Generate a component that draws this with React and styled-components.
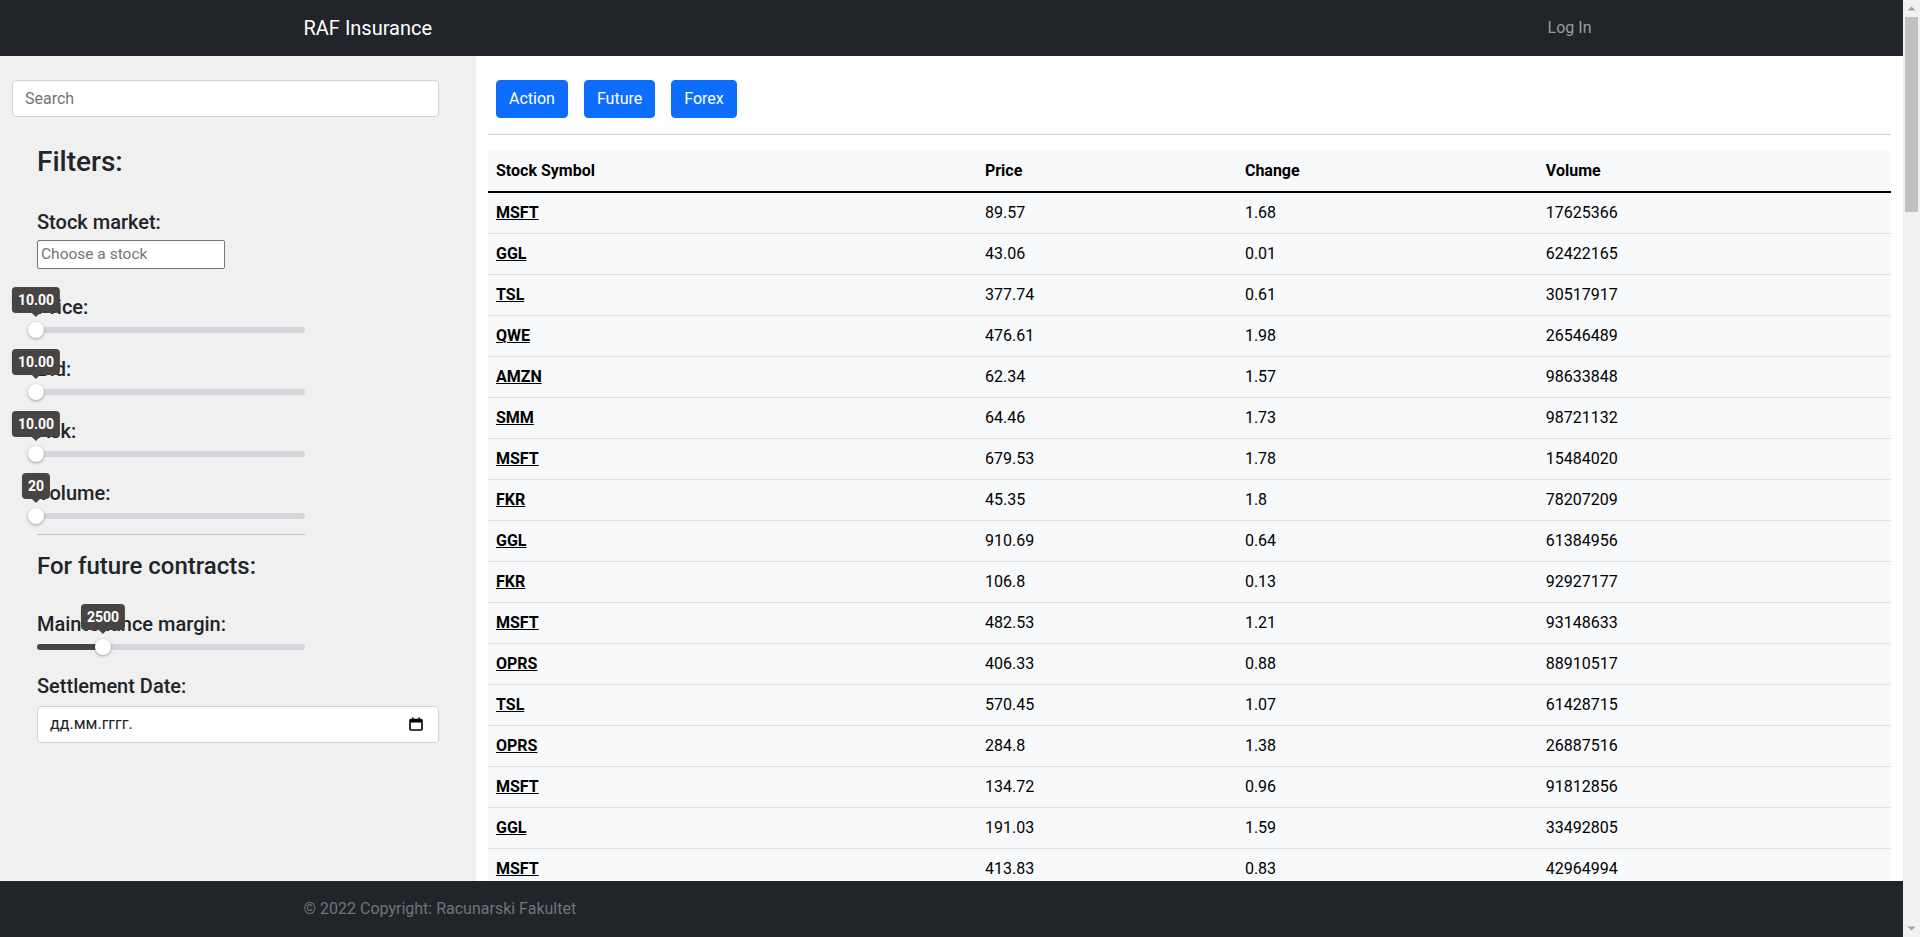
import React from 'react';
import styled, { createGlobalStyle } from 'styled-components';

const GlobalStyle = createGlobalStyle`
  * { box-sizing: border-box; }
  body {
    margin: 0;
    font-family: Roboto, "Liberation Sans", sans-serif;
    font-size: 16px;
    line-height: 1.5;
    color: #212529;
    background: #fff;
    overflow: hidden;
  }
`;

// first rows copied as they are, the rest filled in from a seed
const firstRows = [
  ['MSFT', '89.57', '1.68', '17625366'],
  ['GGL', '43.06', '0.01', '62422165'],
  ['TSL', '377.74', '0.61', '30517917'],
  ['QWE', '476.61', '1.98', '26546489'],
  ['AMZN', '62.34', '1.57', '98633848'],
  ['SMM', '64.46', '1.73', '98721132'],
  ['MSFT', '679.53', '1.78', '15484020'],
  ['FKR', '45.35', '1.8', '78207209'],
  ['GGL', '910.69', '0.64', '61384956'],
  ['FKR', '106.8', '0.13', '92927177'],
  ['MSFT', '482.53', '1.21', '93148633'],
  ['OPRS', '406.33', '0.88', '88910517'],
  ['TSL', '570.45', '1.07', '61428715'],
  ['OPRS', '284.8', '1.38', '26887516'],
  ['MSFT', '134.72', '0.96', '91812856'],
  ['GGL', '191.03', '1.59', '33492805'],
  ['MSFT', '413.83', '0.83', '42964994'],
];

const symbols = ['MSFT', 'GGL', 'TSL', 'QWE', 'AMZN', 'SMM', 'FKR', 'OPRS'];

const makeRows = () => {
  let seed = 42;
  const rnd = () => {
    seed = (seed * 16807) % 2147483647;
    return seed / 2147483647;
  };
  const rows = [...firstRows];
  while (rows.length < 100) {
    rows.push([
      symbols[Math.floor(rnd() * symbols.length)],
      String(Math.round(rnd() * 95000 + 1000) / 100),
      String(Math.round(rnd() * 200) / 100),
      String(Math.floor(rnd() * 90000000 + 10000000)),
    ]);
  }
  return rows;
};

const rows = makeRows();

const sliders = [
  { label: 'Price:', value: 0, text: '10.00' },
  { label: 'Bid:', value: 0, text: '10.00' },
  { label: 'Ask:', value: 0, text: '10.00' },
  { label: 'Volume:', value: 0, text: '20' },
];

function Slider({ label, value, text }) {
  return (
    <SliderGroup>
      <FieldLabel>{label}</FieldLabel>
      <SliderRow>
        <Track>
          <Fill style={{ width: `${value}%` }} />
          <Thumb style={{ left: `${value}%` }}>
            <Tip>{text}</Tip>
          </Thumb>
        </Track>
      </SliderRow>
    </SliderGroup>
  );
}

const CalendarIcon = () => (
  <svg width="14" height="14" viewBox="0 0 14 14" fill="none">
    <rect x="1" y="2.5" width="12" height="10.5" rx="1" stroke="#000" strokeWidth="1.6" />
    <rect x="1" y="2.5" width="12" height="3" fill="#000" />
    <rect x="3" y="0.5" width="1.6" height="3" fill="#000" />
    <rect x="9.4" y="0.5" width="1.6" height="3" fill="#000" />
  </svg>
);

const Arrow = ({ down }) => (
  <svg width="17" height="17" viewBox="0 0 17 17">
    <path d={down ? 'M4.5 6.5h8l-4 4z' : 'M4.5 10.5h8l-4-4z'} fill="#a3a3a3" />
  </svg>
);

export default function App() {
  return (
    <>
      <GlobalStyle />
      <Shell>
        <Viewport>
          <Navbar>
            <Container>
              <Brand>RAF Insurance</Brand>
              <NavLink>Log In</NavLink>
            </Container>
          </Navbar>

          <Page>
            <Sidebar>
              <SearchInput placeholder="Search" />
              <Filters>
                <Title>Filters:</Title>
                <StockLabel>Stock market:</StockLabel>
                <StockInput placeholder="Choose a stock" />
                <Sliders>
                  {sliders.map((s) => (
                    <Slider key={s.label} {...s} />
                  ))}
                </Sliders>
                <Rule />
                <SubTitle>For future contracts:</SubTitle>
                <Slider label="Maintenance margin:" value={25} text="2500" />
                <DateLabel>Settlement Date:</DateLabel>
                <DateField>
                  <span>дд.мм.гггг.</span>
                  <CalendarIcon />
                </DateField>
              </Filters>
            </Sidebar>

            <Main>
              <Buttons>
                <Button>Action</Button>
                <Button>Future</Button>
                <Button>Forex</Button>
              </Buttons>
              <Divider />
              <Table>
                <colgroup>
                  <col style={{ width: '34.85%' }} />
                  <col style={{ width: '18.53%' }} />
                  <col style={{ width: '21.45%' }} />
                  <col style={{ width: '25.17%' }} />
                </colgroup>
                <thead>
                  <tr>
                    <Th>Stock Symbol</Th>
                    <Th>Price</Th>
                    <Th>Change</Th>
                    <Th>Volume</Th>
                  </tr>
                </thead>
                <tbody>
                  {rows.map((r, i) => (
                    <tr key={i}>
                      <Td><Symbol href="#">{r[0]}</Symbol></Td>
                      <Td>{r[1]}</Td>
                      <Td>{r[2]}</Td>
                      <Td>{r[3]}</Td>
                    </tr>
                  ))}
                </tbody>
              </Table>
            </Main>
          </Page>

          <Footer>
            <Container>
              <FooterText>© 2022 Copyright: Racunarski Fakultet</FooterText>
            </Container>
          </Footer>
        </Viewport>

        <Rail>
          <Arrow />
          <RailTrack>
            <RailThumb />
          </RailTrack>
          <Arrow down />
        </Rail>
      </Shell>
    </>
  );
}

const Shell = styled.div`
  height: 100vh;
  display: flex;
`;

const Viewport = styled.div`
  flex: 1;
  min-width: 0;
  overflow-y: auto;
  scrollbar-width: none;
  display: flex;
  flex-direction: column;
  &::-webkit-scrollbar { display: none; }
`;

const Rail = styled.div`
  flex: 0 0 17px;
  background: #f1f1f1;
  display: flex;
  flex-direction: column;
`;

const RailTrack = styled.div`
  flex: 1;
  padding: 0 2px 0 2px;
`;

const RailThumb = styled.div`
  height: 195px;
  background: #c1c1c1;
`;

const Navbar = styled.nav`
  flex-shrink: 0;
  height: 56px;
  background: #212529;
  display: flex;
  align-items: center;
`;

const Container = styled.div`
  width: 100%;
  max-width: 1320px;
  margin: 0 auto;
  padding: 0 12px;
  display: flex;
  align-items: center;
  justify-content: space-between;
`;

const Brand = styled.span`
  color: #fff;
  font-size: 20px;
  line-height: 30px;
`;

const NavLink = styled.span`
  color: rgba(255, 255, 255, 0.55);
  padding: 8px;
  font-size: 16px;
`;

const Page = styled.div`
  flex: 1 0 auto;
  display: flex;
  align-items: stretch;
`;

const Sidebar = styled.aside`
  flex: 0 0 476px;
  background: #f0f0f0;
  padding-top: 24px;
`;

const SearchInput = styled.input`
  display: block;
  width: calc(100% - 49px);
  margin: 0 37px 0 12px;
  height: 37px;
  padding: 6px 12px;
  font: inherit;
  color: #212529;
  background: #fff;
  border: 1px solid #ced4da;
  border-radius: 4px;
  outline: none;
  &::placeholder { color: #6c757d; }
`;

const Filters = styled.div`
  padding: 0 37px;
  display: flex;
  flex-direction: column;
  align-items: flex-start;
`;

const Title = styled.h3`
  margin: 28px 0 0;
  font-size: 28px;
  font-weight: 500;
  line-height: 1.2;
`;

const FieldLabel = styled.h5`
  margin: 0;
  font-size: 20px;
  font-weight: 500;
  line-height: 24px;
`;

const StockLabel = styled(FieldLabel)`
  margin-top: 31px;
`;

const StockInput = styled.input`
  margin-top: 6px;
  width: 188px;
  height: 29px;
  padding: 1px 3px;
  font: inherit;
  font-size: 15.5px;
  border: 1px solid #767676;
  border-radius: 2px;
  background: #fff;
  outline: none;
  &::placeholder { color: #757575; }
`;

const Sliders = styled.div`
  margin-top: 26px;
  display: flex;
  flex-direction: column;
  gap: 17.3px;
`;

const SliderGroup = styled.div`
  display: flex;
  flex-direction: column;
`;

const SliderRow = styled.div`
  margin-top: 1px;
  height: 20px;
  display: flex;
  align-items: center;
`;

const Track = styled.div`
  position: relative;
  width: 268px;
  height: 6px;
  border-radius: 3px;
  background: #d3d6db;
`;

const Fill = styled.div`
  height: 100%;
  border-radius: 3px;
  background: #484443;
`;

const Thumb = styled.div`
  position: absolute;
  top: 50%;
  width: 16px;
  height: 16px;
  margin-left: -9px;
  margin-top: -8px;
  border-radius: 50%;
  background: #fff;
  box-shadow: 0 1px 3px rgba(0, 0, 0, 0.35);
`;

const Tip = styled.div`
  position: absolute;
  bottom: calc(100% + 9px);
  left: 50%;
  transform: translateX(-50%);
  height: 26px;
  padding: 0 6px;
  border-radius: 4px;
  background: #484443;
  color: #fff;
  font-size: 14px;
  font-weight: 700;
  line-height: 26px;
  white-space: nowrap;
  &::after {
    content: '';
    position: absolute;
    top: 100%;
    left: 50%;
    margin-left: -4px;
    border: 4px solid transparent;
    border-top-color: #484443;
  }
`;

const Rule = styled.hr`
  align-self: stretch;
  width: 268px;
  margin: 7.5px 0 0;
  border: 0;
  border-top: 1px solid #c4c4c4;
`;

const SubTitle = styled.h4`
  margin: 17.4px 0 30.7px;
  font-size: 24px;
  font-weight: 500;
  line-height: 1.2;
`;

const DateLabel = styled(FieldLabel)`
  margin-top: 17px;
`;

const DateField = styled.div`
  margin-top: 8px;
  align-self: stretch;
  height: 37px;
  display: flex;
  align-items: center;
  justify-content: space-between;
  padding: 0 15px 0 12px;
  background: #fff;
  border: 1px solid #ced4da;
  border-radius: 4px;
  color: #212529;
`;

const Main = styled.main`
  flex: 1;
  padding: 24px 12px 0 12px;
  min-width: 0;
`;

const Buttons = styled.div`
  display: flex;
  gap: 16px;
  padding-left: 8px;
`;

const Button = styled.button`
  height: 38px;
  padding: 6px 12px;
  font: inherit;
  color: #fff;
  background: #0d6efd;
  border: 1px solid #0d6efd;
  border-radius: 4px;
  cursor: pointer;
`;

const Divider = styled.hr`
  margin: 16px 0;
  border: 0;
  border-top: 1px solid #cfcfcf;
`;

const Table = styled.table`
  width: 100%;
  border-collapse: collapse;
  table-layout: fixed;
  background: #f8f9fa;
  color: #000;
`;

const Th = styled.th`
  text-align: left;
  padding: 8px;
  line-height: 24px;
  font-weight: 700;
  border-bottom: 2px solid #000;
`;

const Td = styled.td`
  padding: 8px;
  line-height: 24px;
  border-bottom: 1px solid #dfe0e1;
`;

const Symbol = styled.a`
  color: #000;
  font-weight: 700;
  text-decoration: underline;
`;

const Footer = styled.footer`
  position: sticky;
  bottom: 0;
  flex-shrink: 0;
  height: 56px;
  background: #212529;
  display: flex;
  align-items: center;
`;

const FooterText = styled.span`
  color: #6c757d;
`;
